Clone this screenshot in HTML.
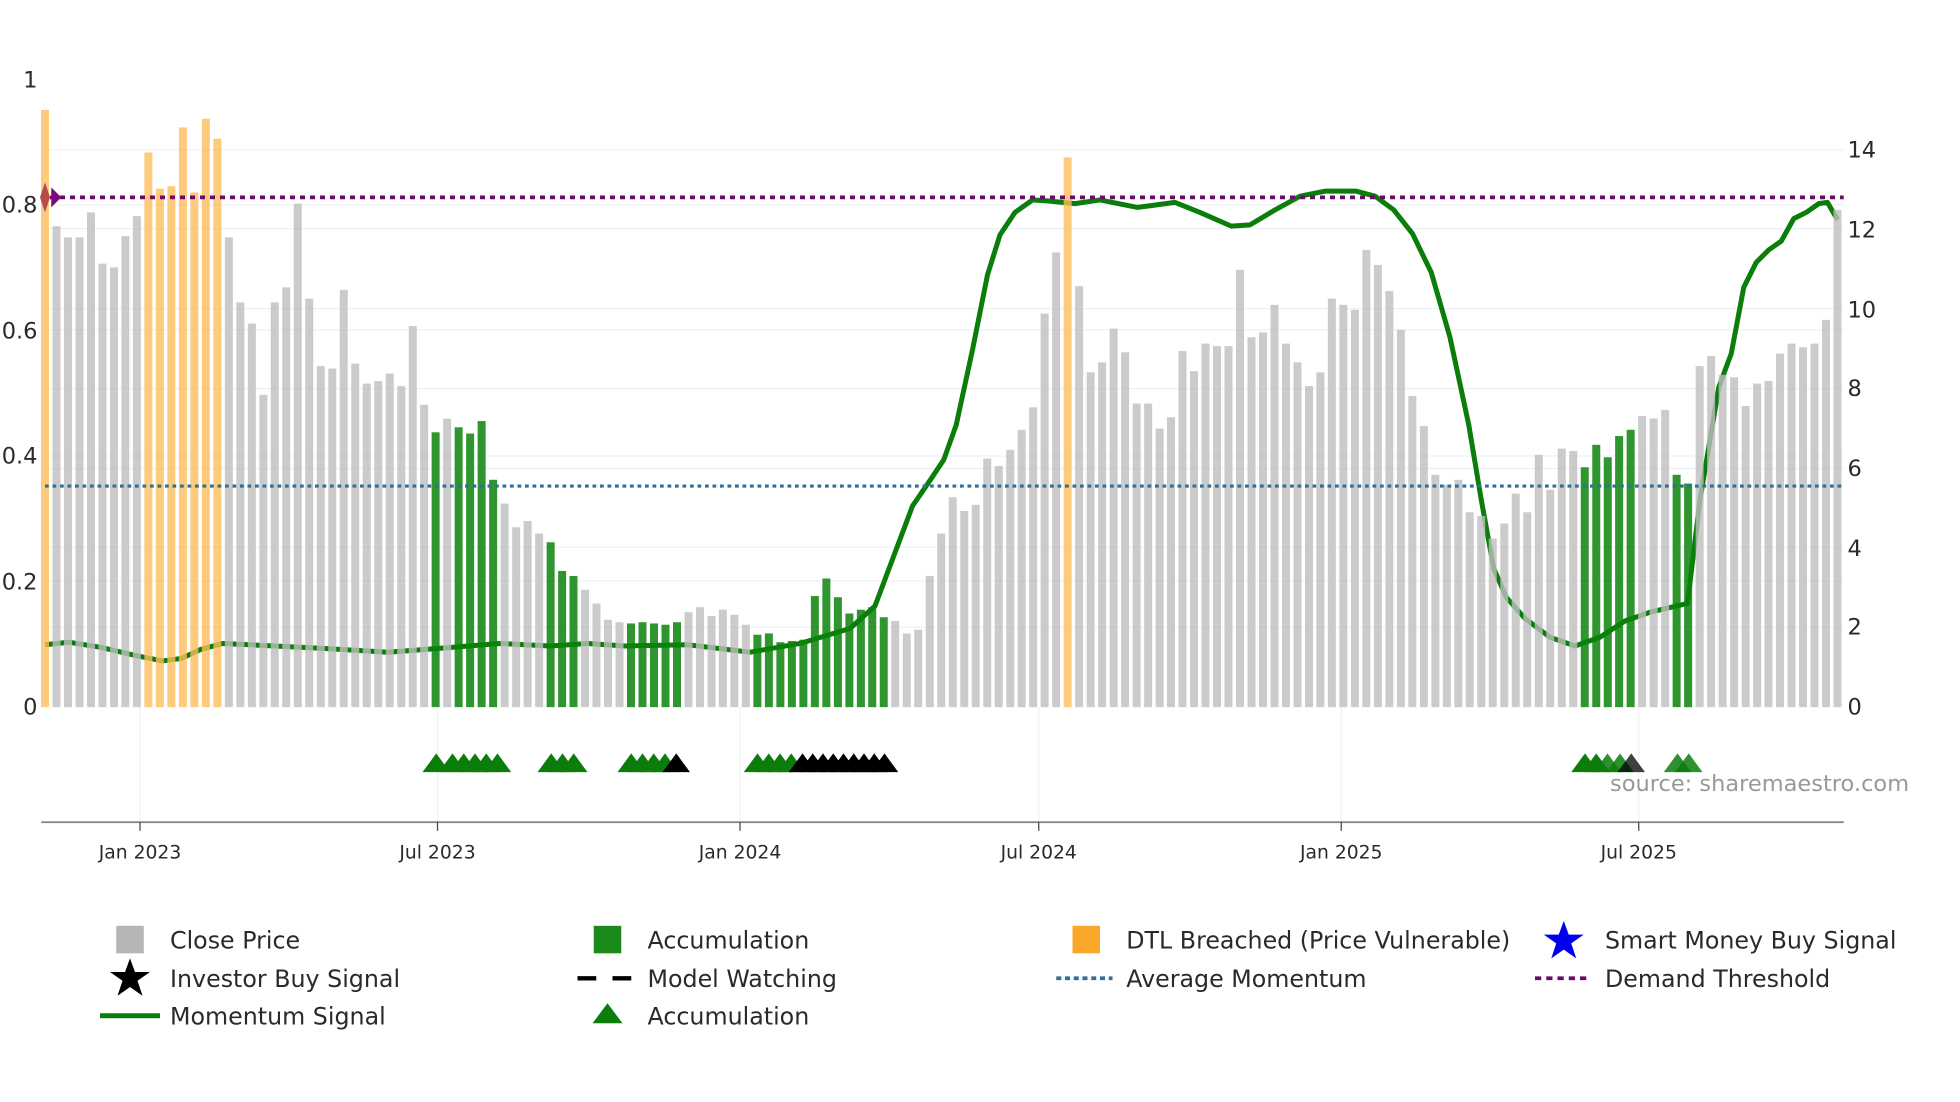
<!DOCTYPE html>
<html><head><meta charset="utf-8"><style>
html,body{margin:0;padding:0;background:#fff;width:1960px;height:1102px;overflow:hidden}
svg{display:block}
text{font-family:"DejaVu Sans","Liberation Sans",sans-serif;fill:#2a2a2a}
</style></head><body>
<svg id="s" width="1960" height="1102" viewBox="0 0 1568 882" preserveAspectRatio="none" xmlns="http://www.w3.org/2000/svg">
<g stroke="#edf0f5" stroke-width="1">
<line x1="33" x2="1475" y1="465" y2="465"/><line x1="33" x2="1475" y1="365" y2="365"/><line x1="33" x2="1475" y1="264" y2="264"/><line x1="33" x2="1475" y1="164" y2="164"/>
<line x1="33" x2="1475" y1="502" y2="502"/><line x1="33" x2="1475" y1="438" y2="438"/><line x1="33" x2="1475" y1="375" y2="375"/><line x1="33" x2="1475" y1="311" y2="311"/><line x1="33" x2="1475" y1="247" y2="247"/><line x1="33" x2="1475" y1="183" y2="183"/><line x1="33" x2="1475" y1="120" y2="120"/>
<line x1="112" x2="112" y1="566" y2="658"/><line x1="350" x2="350" y1="566" y2="658"/><line x1="592" x2="592" y1="566" y2="658"/><line x1="831" x2="831" y1="566" y2="658"/><line x1="1073" x2="1073" y1="566" y2="658"/><line x1="1311" x2="1311" y1="566" y2="658"/>
</g>
<polyline fill="none" stroke="#0a7d0a" stroke-width="4" stroke-linejoin="round" points="36,516 55,514 80,518 110,525 130,529 145,527 160,520 178,515 220,517 260,519 310,522 350,519 400,515 440,517 470,515 500,517 550,516 600,522 640,515 680,503 700,485 715,445 730,405 745,383 755,368 765,340 778,280 790,220 800,188 812,170 826,160 840,161 860,163 880,160 910,166 940,162 960,170 985,181 1000,180 1020,168 1040,157 1060,153 1085,153 1100,157 1115,168 1130,187 1145,218 1160,270 1175,340 1185,400 1195,455 1205,478 1220,495 1240,510 1260,517 1280,510 1300,497 1320,490 1350,483 1360,400 1375,310 1385,283 1395,230 1405,210 1415,200 1425,193 1435,175 1445,170 1455,163 1462,162 1470,176"/>
<g id="bars"></g>
<line x1="36" x2="1475" y1="389" y2="389" stroke="#2f6f9a" stroke-width="2.5" stroke-dasharray="3,3"/>
<line x1="40" x2="1475" y1="158" y2="158" stroke="#6b0a6b" stroke-width="3" stroke-dasharray="4,4"/>
<path d="M36 146 L40 158 L36 170 L32 158Z" fill="#b84a4a"/><path d="M41 150 L49 158 L41 166Z" fill="#7a0a7a"/>
<g id="tri"></g>
<line x1="33" x2="1475" y1="658" y2="658" stroke="#888" stroke-width="1.5"/>
<g stroke="#444" stroke-width="1"><line x1="112" x2="112" y1="658" y2="665"/><line x1="350" x2="350" y1="658" y2="665"/><line x1="592" x2="592" y1="658" y2="665"/><line x1="831" x2="831" y1="658" y2="665"/><line x1="1073" x2="1073" y1="658" y2="665"/><line x1="1311" x2="1311" y1="658" y2="665"/></g>
<g font-size="15" text-anchor="middle">
<text x="112" y="687">Jan 2023</text><text x="350" y="687">Jul 2023</text><text x="592" y="687">Jan 2024</text><text x="831" y="687">Jul 2024</text><text x="1073" y="687">Jan 2025</text><text x="1311" y="687">Jul 2025</text></g>
<g font-size="18" text-anchor="end">
<text x="30" y="70">1</text><text x="30" y="170">0.8</text><text x="30" y="271">0.6</text><text x="30" y="371">0.4</text><text x="30" y="472">0.2</text><text x="30" y="572">0</text></g>
<g font-size="18">
<text x="1478" y="126">14</text><text x="1478" y="190">12</text><text x="1478" y="254">10</text><text x="1478" y="317">8</text><text x="1478" y="381">6</text><text x="1478" y="445">4</text><text x="1478" y="508">2</text><text x="1478" y="572">0</text></g>
<text x="1288" y="633" font-size="18" style="fill:#999">source: sharemaestro.com</text>
<g font-size="19">
<rect x="93" y="741" width="22" height="22" fill="#b5b5b5"/><text x="136" y="759">Close Price</text>
<rect x="475" y="741" width="22" height="22" fill="#1a8a1a"/><text x="518" y="759">Accumulation</text>
<rect x="858" y="741" width="22" height="22" fill="#fba82a"/><text x="901" y="759">DTL Breached (Price Vulnerable)</text>
<path d="M1251 737 L1255 748 L1267 748 L1257 755 L1261 767 L1251 760 L1241 767 L1245 755 L1235 748 L1247 748Z" fill="#0000ee"/><text x="1284" y="759">Smart Money Buy Signal</text>
<path d="M104 767 L108 778 L120 778 L110 785 L114 797 L104 790 L94 797 L98 785 L88 778 L100 778Z" fill="#000"/><text x="136" y="790">Investor Buy Signal</text>
<path d="M462 783 H477 M490 783 H505" stroke="#000" stroke-width="3.5"/><text x="518" y="790">Model Watching</text>
<line x1="845" x2="890" y1="783" y2="783" stroke="#2f6f9a" stroke-width="3" stroke-dasharray="4,3"/><text x="901" y="790">Average Momentum</text>
<line x1="1228" x2="1273" y1="783" y2="783" stroke="#6b0a6b" stroke-width="3" stroke-dasharray="5,4"/><text x="1284" y="790">Demand Threshold</text>
<line x1="80" x2="128" y1="813" y2="813" stroke="#0a7d0a" stroke-width="4"/><text x="136" y="820">Momentum Signal</text>
<path d="M486 803 L498 819 L474 819Z" fill="#0a7d0a"/><text x="518" y="820">Accumulation</text>
</g>
</svg>
<script>
var t=[88,181,190,190,170,211,214,189,173,122,151,149,102,154,95,111,190,242,259,316,242,230,163,239,293,295,232,291,307,305,299,309,261,324,346,335,342,347,337,384,403,422,417,427,434,457,461,472,483,496,498,499,498,499,500,498,490,486,493,488,492,500,508,507,514,513,512,477,463,478,491,488,486,494,497,507,504,461,427,398,409,404,367,373,360,344,326,251,202,126,229,298,290,263,282,323,323,343,334,281,297,275,277,277,216,270,266,244,275,290,309,298,239,244,248,200,212,233,264,317,341,380,388,384,410,413,431,419,395,410,364,392,359,361,374,356,366,349,344,333,335,328,380,387,293,285,300,302,325,307,305,283,275,278,275,256,168];
var O=[0,9,10,11,12,13,14,15,89],G=[34,36,37,38,39,44,45,46,51,52,53,54,55,62,63,64,65,66,67,68,69,70,71,72,73,134,135,136,137,138,142,143];
var s='',n=t.length,st=(1470-36)/(n-1);
for(var i=0;i<n;i++){var x=36+i*st,c=O.indexOf(i)>=0?'rgba(253,190,90,0.8)':G.indexOf(i)>=0?'rgba(10,130,10,0.85)':'rgba(190,190,190,0.8)';
s+='<rect x="'+(x-3.2).toFixed(1)+'" y="'+t[i]+'" width="6.4" height="'+(566-t[i])+'" fill="'+c+'"/>';}
document.getElementById('bars').innerHTML=s;
var tr=[[349,0],[362,0],[371,0],[380,0],[389,0],[398,0],[441,0],[450,0],[459,0],[505,0],[514,0],[523,0],[532,0],[541,1],[606,0],[615,0],[624,0],[633,0]];
for(var x=642;x<=708;x+=8.2)tr.push([x,1]);
tr=tr.concat([[1268,0],[1277,0],[1286,2],[1296,2],[1305,3],[1342,2],[1351,2]]);
var u='';tr.forEach(function(a){var c=['#0a7d0a','#000','rgba(10,125,10,0.85)','rgba(0,0,0,0.75)'][a[1]];
u+='<path d="M'+a[0]+' 603 L'+(a[0]+11)+' 618 L'+(a[0]-11)+' 618Z" fill="'+c+'"/>';});
document.getElementById('tri').innerHTML=u;
</script>
</body></html>
